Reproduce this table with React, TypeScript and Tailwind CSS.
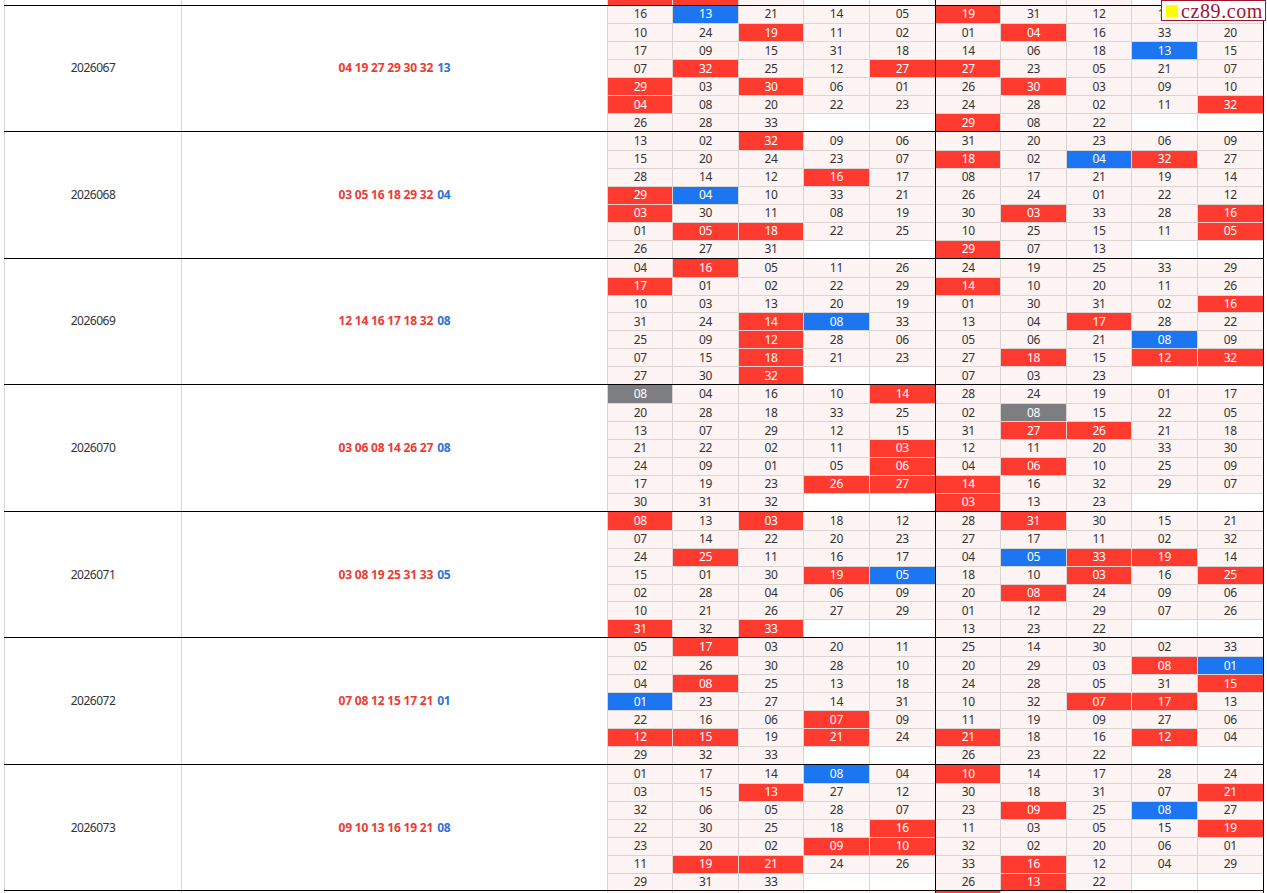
type Period = {
  id: string;
  reds: number[];
  blue: number;
  left: number[][];
  right: number[][];
};

const periods: Period[] = [
  {
    id: "2026067",
    reds: [4, 19, 27, 29, 30, 32],
    blue: 13,
    left: [
      [16, 13, 21, 14, 5],
      [10, 24, 19, 11, 2],
      [17, 9, 15, 31, 18],
      [7, 32, 25, 12, 27],
      [29, 3, 30, 6, 1],
      [4, 8, 20, 22, 23],
      [26, 28, 33],
    ],
    right: [
      [19, 31, 12, 17, 25],
      [1, 4, 16, 33, 20],
      [14, 6, 18, 13, 15],
      [27, 23, 5, 21, 7],
      [26, 30, 3, 9, 10],
      [24, 28, 2, 11, 32],
      [29, 8, 22],
    ],
  },
  {
    id: "2026068",
    reds: [3, 5, 16, 18, 29, 32],
    blue: 4,
    left: [
      [13, 2, 32, 9, 6],
      [15, 20, 24, 23, 7],
      [28, 14, 12, 16, 17],
      [29, 4, 10, 33, 21],
      [3, 30, 11, 8, 19],
      [1, 5, 18, 22, 25],
      [26, 27, 31],
    ],
    right: [
      [31, 20, 23, 6, 9],
      [18, 2, 4, 32, 27],
      [8, 17, 21, 19, 14],
      [26, 24, 1, 22, 12],
      [30, 3, 33, 28, 16],
      [10, 25, 15, 11, 5],
      [29, 7, 13],
    ],
  },
  {
    id: "2026069",
    reds: [12, 14, 16, 17, 18, 32],
    blue: 8,
    left: [
      [4, 16, 5, 11, 26],
      [17, 1, 2, 22, 29],
      [10, 3, 13, 20, 19],
      [31, 24, 14, 8, 33],
      [25, 9, 12, 28, 6],
      [7, 15, 18, 21, 23],
      [27, 30, 32],
    ],
    right: [
      [24, 19, 25, 33, 29],
      [14, 10, 20, 11, 26],
      [1, 30, 31, 2, 16],
      [13, 4, 17, 28, 22],
      [5, 6, 21, 8, 9],
      [27, 18, 15, 12, 32],
      [7, 3, 23],
    ],
  },
  {
    id: "2026070",
    reds: [3, 6, 8, 14, 26, 27],
    blue: 8,
    left: [
      [8, 4, 16, 10, 14],
      [20, 28, 18, 33, 25],
      [13, 7, 29, 12, 15],
      [21, 22, 2, 11, 3],
      [24, 9, 1, 5, 6],
      [17, 19, 23, 26, 27],
      [30, 31, 32],
    ],
    right: [
      [28, 24, 19, 1, 17],
      [2, 8, 15, 22, 5],
      [31, 27, 26, 21, 18],
      [12, 11, 20, 33, 30],
      [4, 6, 10, 25, 9],
      [14, 16, 32, 29, 7],
      [3, 13, 23],
    ],
  },
  {
    id: "2026071",
    reds: [3, 8, 19, 25, 31, 33],
    blue: 5,
    left: [
      [8, 13, 3, 18, 12],
      [7, 14, 22, 20, 23],
      [24, 25, 11, 16, 17],
      [15, 1, 30, 19, 5],
      [2, 28, 4, 6, 9],
      [10, 21, 26, 27, 29],
      [31, 32, 33],
    ],
    right: [
      [28, 31, 30, 15, 21],
      [27, 17, 11, 2, 32],
      [4, 5, 33, 19, 14],
      [18, 10, 3, 16, 25],
      [20, 8, 24, 9, 6],
      [1, 12, 29, 7, 26],
      [13, 23, 22],
    ],
  },
  {
    id: "2026072",
    reds: [7, 8, 12, 15, 17, 21],
    blue: 1,
    left: [
      [5, 17, 3, 20, 11],
      [2, 26, 30, 28, 10],
      [4, 8, 25, 13, 18],
      [1, 23, 27, 14, 31],
      [22, 16, 6, 7, 9],
      [12, 15, 19, 21, 24],
      [29, 32, 33],
    ],
    right: [
      [25, 14, 30, 2, 33],
      [20, 29, 3, 8, 1],
      [24, 28, 5, 31, 15],
      [10, 32, 7, 17, 13],
      [11, 19, 9, 27, 6],
      [21, 18, 16, 12, 4],
      [26, 23, 22],
    ],
  },
  {
    id: "2026073",
    reds: [9, 10, 13, 16, 19, 21],
    blue: 8,
    left: [
      [1, 17, 14, 8, 4],
      [3, 15, 13, 27, 12],
      [32, 6, 5, 28, 7],
      [22, 30, 25, 18, 16],
      [23, 20, 2, 9, 10],
      [11, 19, 21, 24, 26],
      [29, 31, 33],
    ],
    right: [
      [10, 14, 17, 28, 24],
      [30, 18, 31, 7, 21],
      [23, 9, 25, 8, 27],
      [11, 3, 5, 15, 19],
      [32, 2, 20, 6, 1],
      [33, 16, 12, 4, 29],
      [26, 13, 22],
    ],
  },
];

const pad = (n: number) => String(n).padStart(2, "0");

function tone(n: number, reds: number[], blue: number) {
  const r = reds.includes(n);
  const b = n === blue;
  if (r && b) return "bg-[#7c7e81] text-white";
  if (r) return "bg-[#ff3a2f] text-white";
  if (b) return "bg-[#1c76f2] text-white";
  return "bg-[#fdf4f3] text-[#333]";
}

function Half({ rows, reds, blue }: { rows: number[][]; reds: number[]; blue: number }) {
  return (
    <div className="grid grid-cols-5 border-r border-black">
      {rows.map((row, r) =>
        [0, 1, 2, 3, 4].map((c) => {
          const n = row[c];
          const empty = n === undefined;
          return (
            <div
              key={`${r}-${c}`}
              className={`flex h-[17.94px] items-center justify-center text-[12px] leading-none tracking-[-0.3px] ${
                r > 0 ? "border-t border-[#dcd4d3]" : ""
              } ${c < 4 ? "border-r border-[#dcd4d3]" : ""} ${
                empty ? "bg-white" : tone(n, reds, blue)
              }`}
            >
              {empty ? "" : pad(n)}
            </div>
          );
        })
      )}
    </div>
  );
}

function Block({ p }: { p: Period }) {
  return (
    <div className="flex border-t border-black">
      <div className="flex w-[178px] items-center justify-center border-x border-[#d6d6d6] text-[12px] tracking-[-0.5px] text-[#333]">
        {p.id}
      </div>
      <div className="flex w-[426px] items-center justify-center border-r border-[#d6d6d6] text-[12px] font-bold tracking-[-0.2px]">
        <span className="text-[#ec3b34]">{p.reds.map(pad).join(" ")}</span>
        <span className="ml-1 text-[#2f72d9]">{pad(p.blue)}</span>
      </div>
      <div className="grid flex-1 grid-cols-2">
        <Half rows={p.left} reds={p.reds} blue={p.blue} />
        <Half rows={p.right} reds={p.reds} blue={p.blue} />
      </div>
    </div>
  );
}

function StripRow({ left, right }: { left: string[]; right: string[] }) {
  const cells = (list: string[]) => (
    <div className="grid grid-cols-5 border-r border-black">
      {list.map((bg, i) => (
        <div key={i} className={`h-[17.94px] ${i < 4 ? "border-r border-[#dcd4d3]" : ""} ${bg}`} />
      ))}
    </div>
  );
  return (
    <div className="flex">
      <div className="w-[178px] border-x border-[#d6d6d6]" />
      <div className="w-[426px] border-r border-[#d6d6d6]" />
      <div className="grid flex-1 grid-cols-2">
        {cells(left)}
        {cells(right)}
      </div>
    </div>
  );
}

const P = "bg-[#fdf4f3]";
const R = "bg-[#ff3a2f]";
const W = "bg-white";

export default function App() {
  return (
    <div className="relative h-[893px] overflow-hidden bg-white pl-1 font-['Noto_Sans',sans-serif]">
      <div className="w-[1260px]">
        <div className="flex h-[4.5px] flex-col justify-end overflow-hidden">
          <StripRow left={[R, R, P, W, W]} right={[P, P, P, W, W]} />
        </div>
        {periods.map((p) => (
          <Block key={p.id} p={p} />
        ))}
        <div className="border-t border-black">
          <StripRow left={[P, P, P, P, P]} right={[R, P, P, P, P]} />
        </div>
      </div>

      {/* site watermark sits over the top-right cells */}
      <div className="absolute right-[1px] top-0 flex h-[21px] items-center gap-[3px] border border-[#a3122b] bg-white pl-1 pr-[2px]">
        <span className="h-3 w-3 bg-[#ffff00]" />
        <span className="font-['Liberation_Serif',serif] text-[20px] leading-none tracking-[0.6px] text-[#a3122b]">
          cz89.com
        </span>
      </div>
    </div>
  );
}
